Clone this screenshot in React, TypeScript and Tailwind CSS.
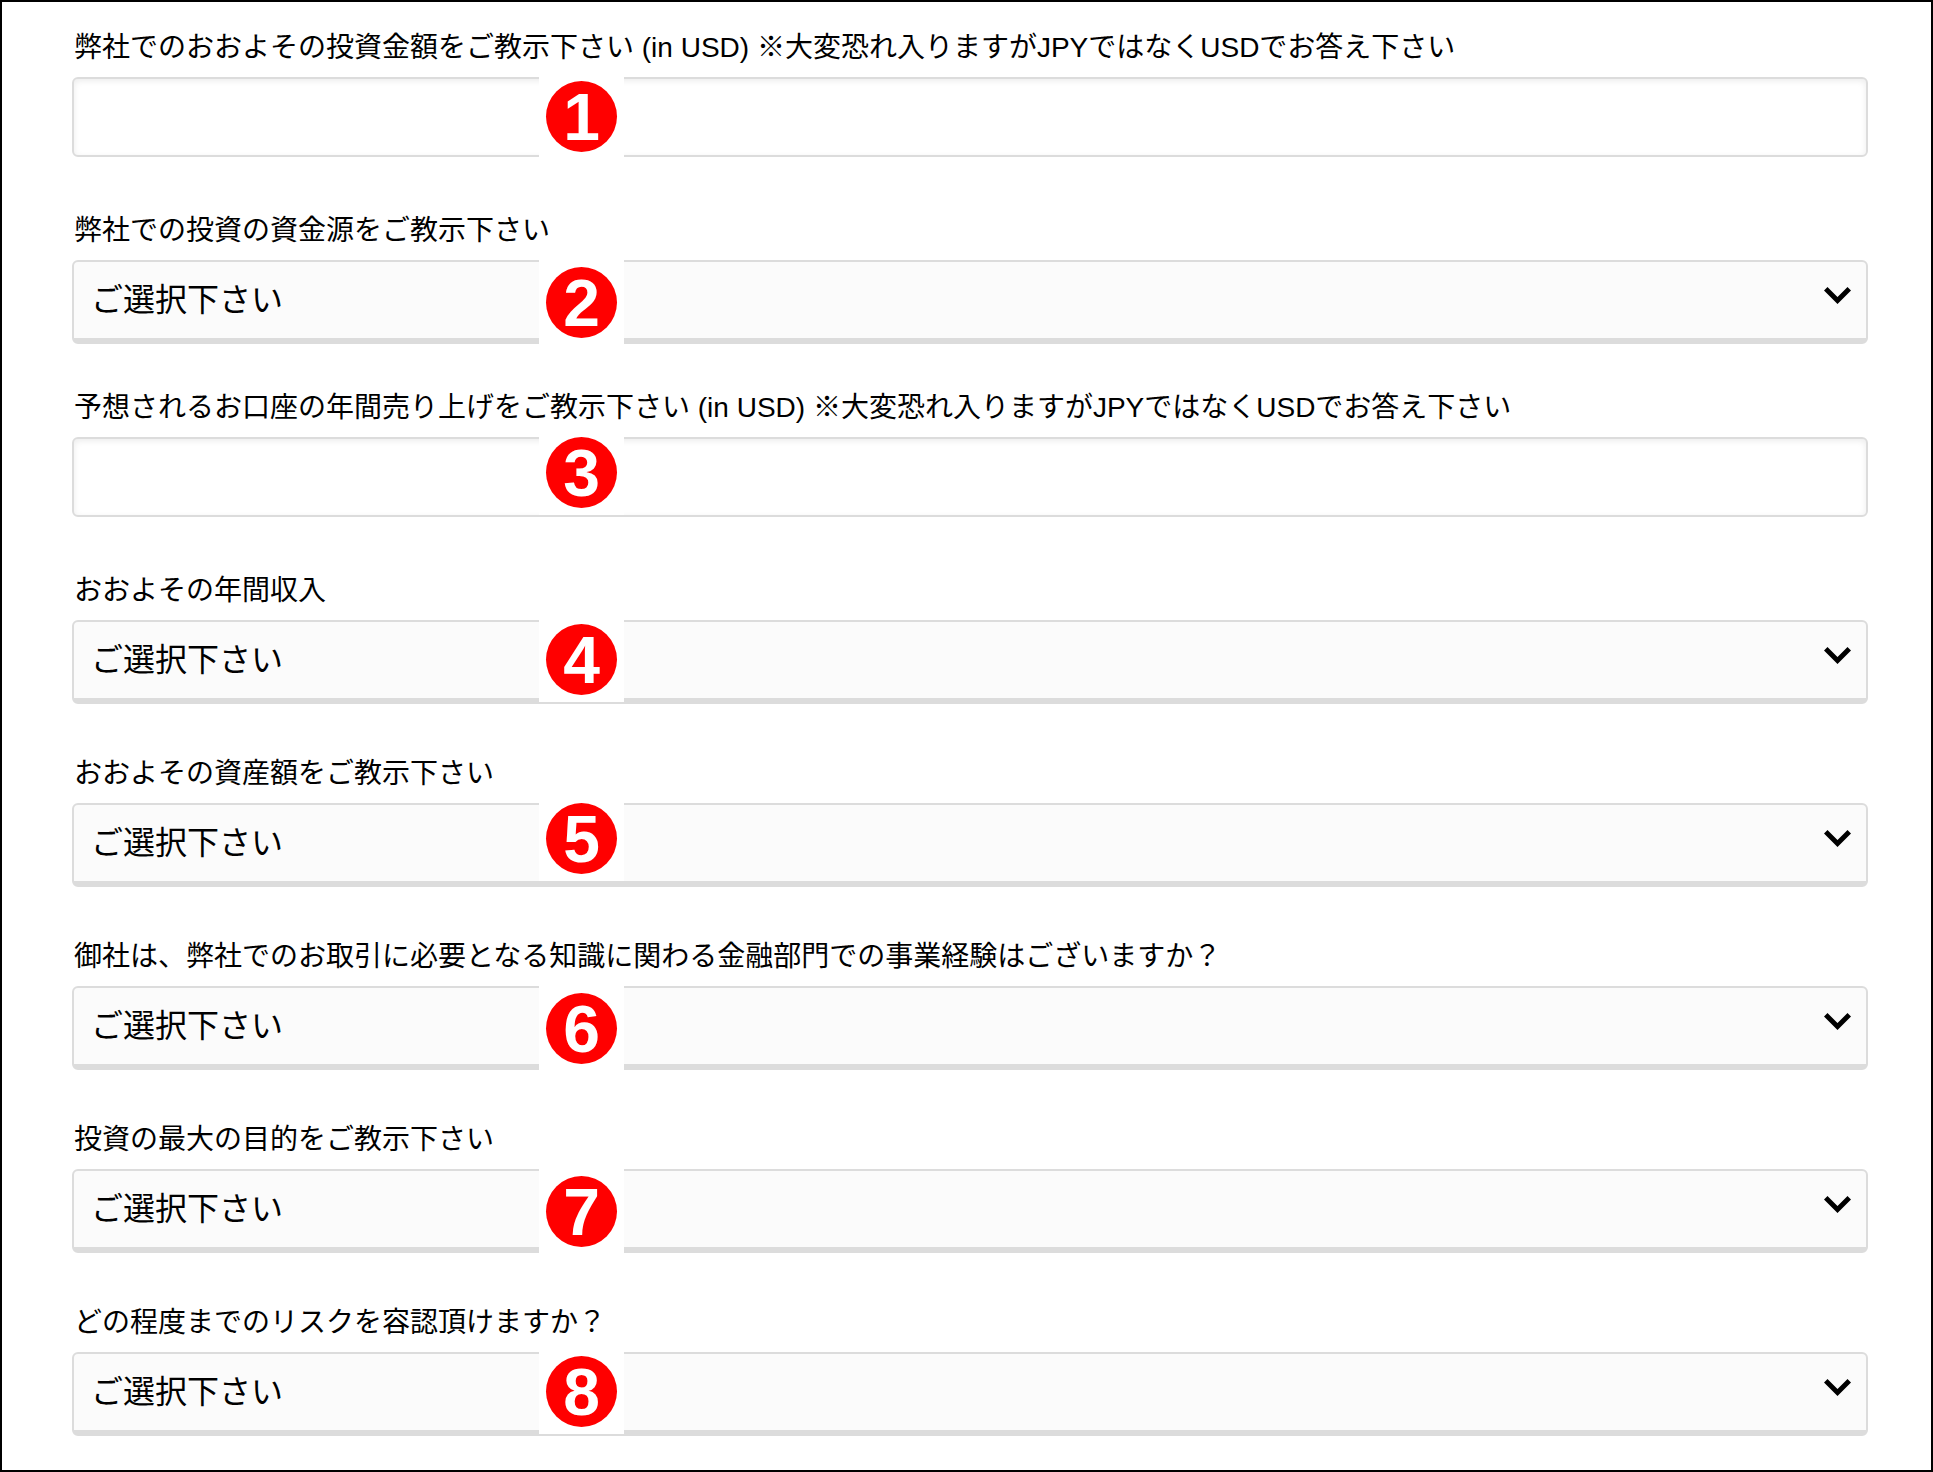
import React from "react";
import clsx from "clsx";

const fields = [
  {
    id: "investment-amount",
    type: "text",
    label:
      "弊社でのおおよその投資金額をご教示下さい (in USD) ※大変恐れ入りますがJPYではなくUSDでお答え下さい",
    badge: "-top-[3px]",
  },
  {
    id: "source-of-funds",
    type: "select",
    label: "弊社での投資の資金源をご教示下さい",
    badge: "top-0",
  },
  {
    id: "annual-turnover",
    type: "text",
    label:
      "予想されるお口座の年間売り上げをご教示下さい (in USD) ※大変恐れ入りますがJPYではなくUSDでお答え下さい",
    badge: "-top-[7px]",
  },
  {
    id: "annual-income",
    type: "select",
    label: "おおよその年間収入",
    badge: "-top-[3px]",
  },
  {
    id: "net-worth",
    type: "select",
    label: "おおよその資産額をご教示下さい",
    badge: "-top-[7px]",
  },
  {
    id: "experience",
    type: "select",
    label:
      "御社は、弊社でのお取引に必要となる知識に関わる金融部門での事業経験はございますか？",
    badge: "top-0",
  },
  {
    id: "objective",
    type: "select",
    label: "投資の最大の目的をご教示下さい",
    badge: "top-0",
  },
  {
    id: "risk",
    type: "select",
    label: "どの程度までのリスクを容認頂けますか？",
    badge: "-top-[3px]",
  },
];

const Chevron = () => (
  <svg
    viewBox="0 0 27 17"
    className="pointer-events-none absolute top-[27px] right-[17px] h-[17px] w-[27px]"
    aria-hidden="true"
  >
    <path d="M0 3.5 3.5 0l10 10 10-10L27 3.5 13.5 17z" fill="#000" />
  </svg>
);

const Badge = ({ number, className }: { number: number; className: string }) => (
  <span
    className={clsx(
      "pointer-events-none absolute left-[467px] flex h-[85px] w-[85px] items-center justify-center bg-white",
      className,
    )}
  >
    <span className="flex size-[71px] items-center justify-center rounded-full bg-[#ff0000] font-['Liberation_Sans',sans-serif] text-[66px] leading-none font-bold text-white">
      {number}
    </span>
  </span>
);

const App = () => {
  return (
    <main className="min-h-screen border-2 border-black bg-white pt-[25px] pr-[63px] pb-8 pl-[70px] font-['Liberation_Sans','Noto_Sans_CJK_JP',sans-serif] text-black">
      <form>
        {fields.map(({ id, type, label, badge }, index) => (
          <div
            key={id}
            className={clsx(
              "last:mb-0",
              type === "text" ? "mb-[47px]" : "mb-[43px] pt-1.5",
            )}
          >
            <label
              htmlFor={id}
              className="mb-2 block pl-0.5 text-[28px] leading-[42px]"
            >
              {label}
            </label>

            <div className="relative">
              {type === "text" ? (
                <input
                  id={id}
                  type="text"
                  className="block h-20 w-full rounded-md border-2 border-[#dcdcdc] bg-white px-5 text-[32px] shadow-[inset_0_2px_6px_rgba(0,0,0,0.08)] outline-none"
                />
              ) : (
                <>
                  <select
                    id={id}
                    className="block h-[84px] w-full appearance-none rounded-md border-2 border-b-6 border-[#dcdcdc] bg-[#fbfbfb] pr-14 pb-px pl-[17px] text-[32px] outline-none"
                  >
                    <option>ご選択下さい</option>
                  </select>
                  <Chevron />
                </>
              )}
              <Badge number={index + 1} className={badge} />
            </div>
          </div>
        ))}
      </form>
    </main>
  );
};

export default App;
